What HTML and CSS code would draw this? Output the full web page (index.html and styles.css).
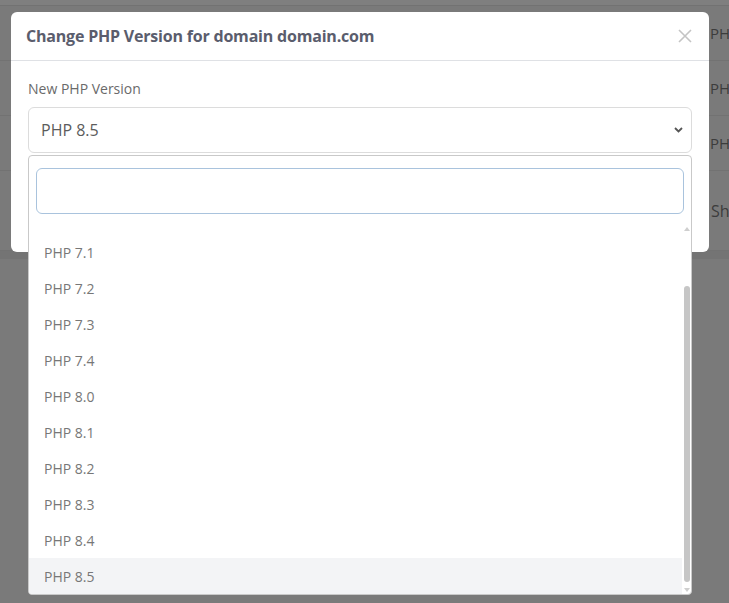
FILE: index.html
```html
<!DOCTYPE html>
<html lang="en">
<head>
    <meta charset="UTF-8">
    <meta name="viewport" content="width=device-width, initial-scale=1.0">
    <title>Change PHP Version</title>
    <link rel="stylesheet" href="styles.css">
</head>
<body>
    <!-- Page behind the modal backdrop -->
    <div class="page">
        <div class="page-top"></div>
        <div class="page-row">PHP 8.3</div>
        <div class="page-row">PHP 8.4</div>
        <div class="page-row">PHP 8.5</div>
        <div class="page-row page-row-tall">Show</div>
        <div class="page-foot"></div>
    </div>

    <div class="modal">
        <div class="modal-header">
            <h5 class="modal-title">Change PHP Version for domain domain.com</h5>
            <button class="modal-close" type="button" aria-label="Close">
                <svg width="14" height="14" viewBox="0 0 14 14"><path d="M1 1L13 13M13 1L1 13" stroke="#c4c4c4" stroke-width="1.6" fill="none"/></svg>
            </button>
        </div>
        <div class="modal-body">
            <label class="form-label">New PHP Version</label>
            <div class="select-box">
                <span>PHP 8.5</span>
                <svg width="9" height="6" viewBox="0 0 9 6"><path d="M1 1L4.5 4.5L8 1" stroke="#555" stroke-width="1.8" fill="none"/></svg>
            </div>
        </div>
    </div>

    <!-- Open select dropdown, lies over the modal -->
    <div class="dropdown">
        <div class="dropdown-search">
            <input type="text" class="search-input">
        </div>
        <div class="dropdown-list">
            <ul class="options">
                <li>PHP 7.1</li>
                <li>PHP 7.2</li>
                <li>PHP 7.3</li>
                <li>PHP 7.4</li>
                <li>PHP 8.0</li>
                <li>PHP 8.1</li>
                <li>PHP 8.2</li>
                <li>PHP 8.3</li>
                <li>PHP 8.4</li>
                <li class="selected">PHP 8.5</li>
            </ul>
            <div class="scrollbar">
                <span class="arrow-up"></span>
                <div class="track"><div class="thumb"></div></div>
                <span class="arrow-down"></span>
            </div>
        </div>
    </div>
</body>
</html>
```

FILE: styles.css
```css
* {
    box-sizing: border-box;
}

body {
    margin: 0;
    height: 603px;
    overflow: hidden;
    background-color: #7a7a7a;
    font-family: 'Open Sans', 'Noto Sans', sans-serif;
    position: relative;
}

/* --- Dimmed page behind the modal --- */
.page {
    display: flex;
    flex-direction: column;
}

.page-top {
    height: 6px;
    background-color: #7f7f7f;
    border-bottom: 1px solid #727272;
}

.page-row {
    height: 55px;
    border-bottom: 1px solid #727272;
    padding-left: 710px;
    display: flex;
    align-items: center;
    font-size: 15px;
    color: #3c3c3c;
    white-space: nowrap;
    overflow: hidden;
}

.page-row-tall {
    height: 80px;
    padding-left: 711px;
    font-size: 16px;
}

.page-foot {
    height: 8px;
    background-color: #747474;
}

/* --- Modal --- */
.modal {
    position: absolute;
    top: 12px;
    left: 11px;
    width: 698px;
    height: 240px;
    background-color: #fff;
    border-radius: 6px;
}

.modal-header {
    height: 49px;
    display: flex;
    align-items: center;
    justify-content: space-between;
    padding: 0 17px 0 15px;
    border-bottom: 1px solid #dfe1e5;
}

.modal-title {
    margin: 0;
    font-size: 16px;
    font-weight: 700;
    color: #5a5d6d;
    letter-spacing: -0.2px;
}

.modal-close {
    border: 0;
    background: none;
    padding: 0;
    display: flex;
}

.modal-body {
    padding: 18px 17px;
}

.form-label {
    display: block;
    font-size: 14px;
    line-height: 19px;
    color: #6a6a6a;
    margin-bottom: 9px;
}

.select-box {
    height: 46px;
    border: 1px solid #dcdcdc;
    border-radius: 6px;
    display: flex;
    align-items: center;
    justify-content: space-between;
    padding: 0 8px 0 12px;
    font-size: 16px;
    color: #5c5c5c;
}

/* --- Dropdown --- */
.dropdown {
    position: absolute;
    top: 155px;
    left: 28px;
    width: 664px;
    height: 440px;
    background-color: #fff;
    border: 1px solid #c9c9c9;
    border-radius: 4px;
    display: flex;
    flex-direction: column;
    overflow: hidden;
}

.dropdown-search {
    padding: 12px 7px 8px;
}

.search-input {
    display: block;
    width: 100%;
    height: 46px;
    border: 1px solid #a9c3dd;
    border-radius: 6px;
    outline: none;
}

.dropdown-list {
    flex: 1;
    display: flex;
    position: relative;
}

.options {
    list-style: none;
    margin: 0;
    padding: 12px 0 0;
    flex: 1;
}

.options li {
    height: 36px;
    display: flex;
    align-items: center;
    padding-left: 15px;
    font-size: 14px;
    color: #777;
}

.options li.selected {
    background-color: #f3f4f6;
}

.scrollbar {
    width: 9px;
    display: flex;
    flex-direction: column;
    align-items: center;
    padding: 5px 0 2px;
}

.arrow-up, .arrow-down {
    width: 0;
    height: 0;
    border-left: 3px solid transparent;
    border-right: 3px solid transparent;
}

.arrow-up {
    border-bottom: 4px solid #cfcfcf;
}

.arrow-down {
    border-top: 4px solid #cfcfcf;
}

.track {
    flex: 1;
    width: 6px;
    padding: 55px 0 6px;
    display: flex;
}

.thumb {
    flex: 1;
    background-color: #c6c6c6;
    border-radius: 3px;
}
```
